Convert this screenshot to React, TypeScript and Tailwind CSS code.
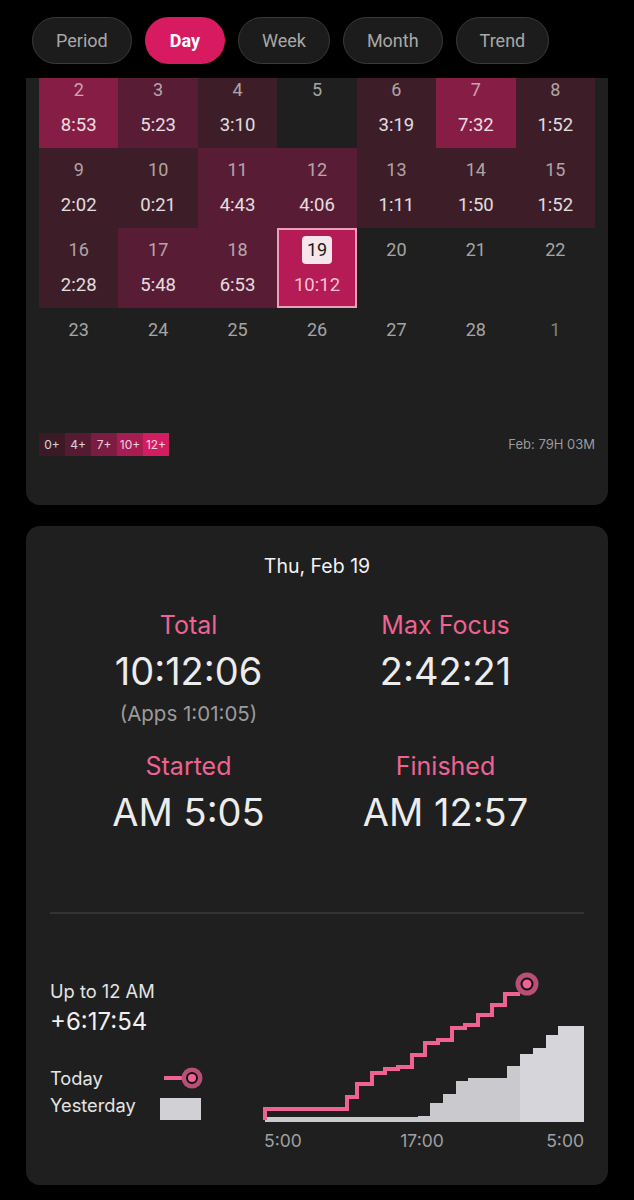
import React from 'react';

// --- Calendar data for February ---
type Level = 0 | 1 | 2 | 3 | 4 | -1;

interface DayCell {
    day: number;
    time?: string;
    level: Level;
    selected?: boolean;
    muted?: boolean;
}

const levelBg: Record<string, string> = {
    '-1': 'bg-transparent',
    '0': 'bg-[#3d1d28]',
    '1': 'bg-[#581d34]',
    '2': 'bg-[#861d45]',
    '3': 'bg-[#b51c55]',
    '4': 'bg-[#d81b60]',
};

const weeks: DayCell[][] = [
    [
        { day: 2, time: '8:53', level: 2 },
        { day: 3, time: '5:23', level: 1 },
        { day: 4, time: '3:10', level: 0 },
        { day: 5, level: -1 },
        { day: 6, time: '3:19', level: 0 },
        { day: 7, time: '7:32', level: 2 },
        { day: 8, time: '1:52', level: 0 },
    ],
    [
        { day: 9, time: '2:02', level: 0 },
        { day: 10, time: '0:21', level: 0 },
        { day: 11, time: '4:43', level: 1 },
        { day: 12, time: '4:06', level: 1 },
        { day: 13, time: '1:11', level: 0 },
        { day: 14, time: '1:50', level: 0 },
        { day: 15, time: '1:52', level: 0 },
    ],
    [
        { day: 16, time: '2:28', level: 0 },
        { day: 17, time: '5:48', level: 1 },
        { day: 18, time: '6:53', level: 1 },
        { day: 19, time: '10:12', level: 3, selected: true },
        { day: 20, level: -1 },
        { day: 21, level: -1 },
        { day: 22, level: -1 },
    ],
    [
        { day: 23, level: -1 },
        { day: 24, level: -1 },
        { day: 25, level: -1 },
        { day: 26, level: -1 },
        { day: 27, level: -1 },
        { day: 28, level: -1 },
        { day: 1, level: -1, muted: true },
    ],
];

const legend = [
    { label: '0+', bg: 'bg-[#3b1a26]' },
    { label: '4+', bg: 'bg-[#551b32]' },
    { label: '7+', bg: 'bg-[#7d1c43]' },
    { label: '10+', bg: 'bg-[#a81b53]' },
    { label: '12+', bg: 'bg-[#d21d62]' },
];

const tabs = ['Period', 'Day', 'Week', 'Month', 'Trend'];

const CalendarCell: React.FC<{ cell: DayCell }> = ({ cell }) => (
    <div
        className={`h-[80px] flex flex-col items-center pt-[10px] ${levelBg[String(cell.level)]} ${
            cell.selected ? 'outline-2 -outline-offset-2 outline-[#eba0ba]' : ''
        }`}
    >
        {cell.selected ? (
            <span className="h-[28px] -mt-[2px] px-[5px] rounded-[4px] bg-[#f4e6eb] text-[#1a1a1a] text-[18px] leading-[28px]">
                {cell.day}
            </span>
        ) : (
            <span className={`text-[18px] leading-[24px] ${cell.muted ? 'text-white/45' : 'text-white/60'}`}>{cell.day}</span>
        )}
        {cell.time && (
            <span
                className={`text-[18.5px] leading-[24px] ${cell.selected ? 'mt-[9px] text-[#f7c3d3]' : 'mt-[11px] text-white/85'}`}
            >
                {cell.time}
            </span>
        )}
    </div>
);

// Step lines for the daily progress chart (320 x 152 box)
const todayPath =
    'M1,150 V139 H83 V127 H93 V114 H108 V103 H121 V99 H134 V97 H148 V85 H161 V73 H174 V70 H188 V58 H201 V55 H214 V45 H228 V35 H241 V24 H256';
const yesterdayPast =
    '1,152 1,147 154,147 154,146 166,146 166,133 179,133 179,124 192,124 192,111 204,111 204,108 243,108 243,96 256,96 256,152';
const yesterdayRest = '256,152 256,84 269,84 269,78 282,78 282,65 294,65 294,56 320,56 320,152';

const StatBlock: React.FC<{ label: string; value: string; sub?: string }> = ({ label, value, sub }) => (
    <div className="flex flex-col items-center">
        <div className="text-[25px] leading-[30px] text-[#ee6393]">{label}</div>
        <div className="mt-[9px] text-[38px] leading-[44px] text-[#ececec]">{value}</div>
        {sub && <div className="mt-[9px] text-[20.5px] leading-[24px] text-[#9b9b9b]">{sub}</div>}
    </div>
);

const App: React.FC = () => {
    return (
        <div className="w-[634px] min-h-[1200px] bg-black font-['Inter',sans-serif] text-white overflow-hidden">
            {/* Tab bar */}
            <header className="h-[78px] pt-[17px] pl-[32px] flex gap-[13px] font-['Roboto',sans-serif]">
                {tabs.map(tab =>
                    tab === 'Day' ? (
                        <div key={tab} className="h-[47px] px-[25px] rounded-full bg-[#d81b60] text-white font-bold text-[18px] flex items-center">
                            {tab}
                        </div>
                    ) : (
                        <div
                            key={tab}
                            className="h-[47px] px-[23px] rounded-full bg-[#1c1c1c] border border-[#3a3a3a] text-[#a8a8a8] text-[18px] flex items-center"
                        >
                            {tab}
                        </div>
                    )
                )}
            </header>

            {/* Month heatmap card (top scrolled under the tabs) */}
            <section className="mx-[26px] w-[582px] bg-[#1f1f1f] rounded-b-[14px] overflow-hidden px-[13px] pb-[49px]">
                <div className="-mt-[10px] grid grid-cols-7 font-['Roboto',sans-serif]">
                    {weeks.flat().map(cell => (
                        <CalendarCell key={`${cell.day}-${cell.muted ? 'n' : 'c'}`} cell={cell} />
                    ))}
                </div>
                <div className="mt-[45px] flex items-center justify-between">
                    <div className="flex">
                        {legend.map(l => (
                            <div key={l.label} className={`w-[26px] h-[23px] flex items-center justify-center text-[12px] text-white/80 ${l.bg}`}>
                                {l.label}
                            </div>
                        ))}
                    </div>
                    <div className="text-[13px] text-[#9a9a9a]">Feb: 79H 03M</div>
                </div>
            </section>

            {/* Day detail card */}
            <section className="mt-[21px] mx-[26px] w-[582px] bg-[#1f1f1f] rounded-[14px] pt-[28px] pb-[34px]">
                <div className="text-center text-[19.5px] leading-[24px] text-[#f2f2f2]">Thu, Feb 19</div>

                <div className="mt-[32px] px-[34px] grid grid-cols-2">
                    <StatBlock label="Total" value="10:12:06" sub="(Apps 1:01:05)" />
                    <StatBlock label="Max Focus" value="2:42:21" />
                </div>
                <div className="mt-[25px] px-[34px] grid grid-cols-2">
                    <StatBlock label="Started" value="AM 5:05" />
                    <StatBlock label="Finished" value="AM 12:57" />
                </div>

                <div className="mt-[78px] mx-[24px] h-[2px] bg-[#333333]" />

                <div className="px-[24px] flex">
                    {/* Comparison summary + legend */}
                    <div className="w-[214px] pt-[66px]">
                        <div className="text-[18.3px] leading-[22px] text-[#e4e4e4]">Up to 12 AM</div>
                        <div className="mt-[5px] text-[24px] leading-[30px] text-[#f0f0f0]">+6:17:54</div>
                        <div className="mt-[29px] flex items-center">
                            <span className="w-[110px] text-[18.3px] leading-[24px] text-[#e4e4e4]">Today</span>
                            <svg width="46" height="24" viewBox="0 0 46 24">
                                <line x1="4" y1="12" x2="26" y2="12" stroke="#f06292" strokeWidth="4" />
                                <circle cx="32" cy="12" r="10.5" fill="#b84f77" />
                                <circle cx="32" cy="12" r="5" fill="#f06292" stroke="#111" strokeWidth="2" />
                            </svg>
                        </div>
                        <div className="mt-[3px] flex items-start">
                            <span className="w-[110px] text-[18.3px] leading-[24px] text-[#e4e4e4]">Yesterday</span>
                            <div className="mt-[5px] w-[41px] h-[22px] bg-[#d0d0d5]" />
                        </div>
                    </div>

                    {/* Cumulative step chart */}
                    <div className="w-[320px] pt-[56px]">
                        <svg width="320" height="152" viewBox="0 0 320 152" className="block overflow-visible">
                            <polygon points={yesterdayPast} fill="#c9c9ce" />
                            <polygon points={yesterdayRest} fill="#d6d6da" />
                            <path d={todayPath} fill="none" stroke="#f06292" strokeWidth="4" strokeLinejoin="miter" />
                            <circle cx="263" cy="14" r="11.5" fill="#b84f77" />
                            <circle cx="263" cy="14" r="5.5" fill="#f06292" stroke="#111" strokeWidth="2" />
                        </svg>
                        <div className="mt-[9px] flex justify-between text-[17.5px] leading-[20px] text-[#a0a0a0]">
                            <span>5:00</span>
                            <span className="-ml-[4px]">17:00</span>
                            <span>5:00</span>
                        </div>
                    </div>
                </div>
            </section>
        </div>
    );
};

export default App;
